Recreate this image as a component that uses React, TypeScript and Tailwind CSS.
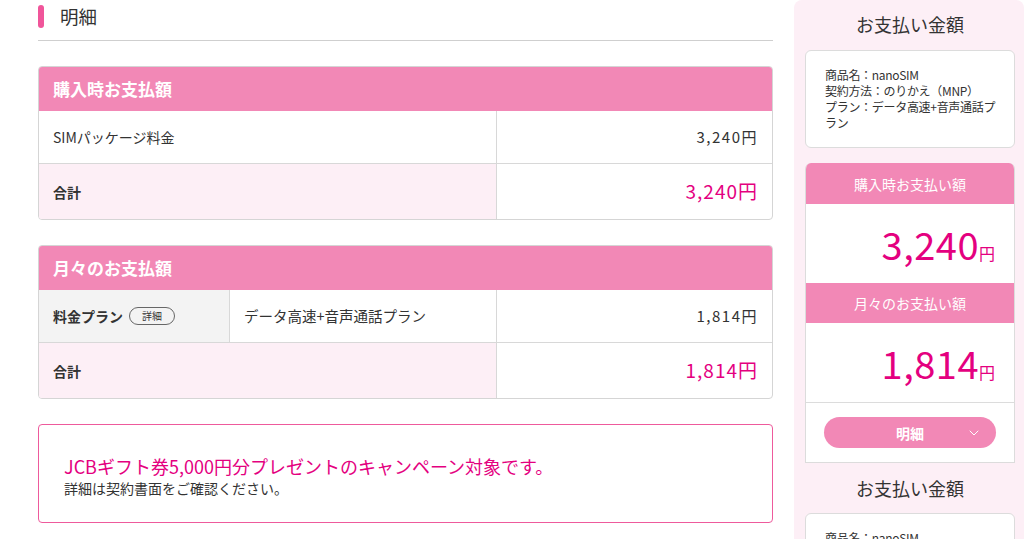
import { ChevronDown } from "lucide-react";

const font = {
  fontFamily: '"Noto Sans CJK JP", "Noto Sans", sans-serif',
};

const Yen = ({ amount, className }: { amount: string; className?: string }) => (
  <span className={className}>{amount}円</span>
);

const SummaryInfo = () => (
  <div className="rounded-md border border-[#dcdcdc] bg-white py-4 pl-[19px] pr-4 text-xs leading-4 tracking-[-0.3px] text-[#333] [line-break:anywhere]">
    <p>商品名：nanoSIM</p>
    <p>契約方法：のりかえ（MNP）</p>
    <p>プラン：データ高速+音声通話プラン</p>
  </div>
);

const BigAmount = ({ value }: { value: string }) => (
  <div className="flex h-[79px] items-center justify-end bg-white pr-[19px] text-[#e4007f]">
    <span className="flex items-baseline">
      <span className="text-[38px] leading-none tracking-[0.5px]">{value}</span>
      <span className="text-base leading-none">円</span>
    </span>
  </div>
);

export default function App() {
  return (
    <div className="flex h-[539px] w-[1024px] overflow-hidden bg-white text-[#333]" style={font}>
      {/* main */}
      <div className="ml-[38px] w-[735px] shrink-0">
        <div className="flex h-[41px] items-start border-b border-[#cfcfcf] pt-[5px]">
          <div className="h-[23px] w-[6px] rounded-sm bg-[#f0559a]" />
          <h2 className="ml-4 text-[18.5px] leading-[23px]">明細</h2>
        </div>

        <div className="mt-[25px] overflow-hidden rounded border border-[#d5d5d5]">
          <div className="flex h-[44px] items-center bg-[#f288b6] pl-[14px] text-[17px] font-bold text-white">
            購入時お支払額
          </div>
          <div className="grid h-[52px] grid-cols-[458px_1fr] text-sm">
            <div className="flex items-center border-r border-[#d8d8d8] pl-[14px]">SIMパッケージ料金</div>
            <div className="flex items-center justify-end pr-[14px]">
              <Yen amount="3,240" className="text-[15px] tracking-[1.5px]" />
            </div>
          </div>
          <div className="grid h-[56px] grid-cols-[458px_1fr] border-t border-[#d8d8d8]">
            <div className="flex items-center border-r border-[#d8d8d8] bg-[#fdeff6] pl-[14px] text-sm font-bold">合計</div>
            <div className="flex items-center justify-end pr-[14px] text-[#e4007f]">
              <Yen amount="3,240" className="text-[19px] tracking-[1px]" />
            </div>
          </div>
        </div>

        <div className="mt-[25px] overflow-hidden rounded border border-[#d5d5d5]">
          <div className="flex h-[44px] items-center bg-[#f288b6] pl-[14px] text-[17px] font-bold text-white">
            月々のお支払額
          </div>
          <div className="grid h-[52px] grid-cols-[191px_267px_1fr] text-sm">
            <div className="flex items-center gap-1 border-r border-[#d8d8d8] bg-[#f3f3f3] pl-[14px] font-bold">
              料金プラン
              <span className="ml-[2px] flex h-[18px] w-[46px] items-center justify-center rounded-full border border-[#666] text-[10px] font-normal">
                詳細
              </span>
            </div>
            <div className="flex items-center border-r border-[#d8d8d8] pl-[14px] text-[14.5px]">データ高速+音声通話プラン</div>
            <div className="flex items-center justify-end pr-[14px]">
              <Yen amount="1,814" className="text-[15px] tracking-[1.5px]" />
            </div>
          </div>
          <div className="grid h-[56px] grid-cols-[458px_1fr] border-t border-[#d8d8d8]">
            <div className="flex items-center border-r border-[#d8d8d8] bg-[#fdeff6] pl-[14px] text-sm font-bold">合計</div>
            <div className="flex items-center justify-end pr-[14px] text-[#e4007f]">
              <Yen amount="1,814" className="text-[19px] tracking-[1px]" />
            </div>
          </div>
        </div>

        <div className="mt-[25px] flex h-[99px] flex-col justify-center rounded border border-[#ee5a9c] pl-[25px] pt-1">
          <p className="text-lg leading-6 text-[#e4007f]">JCBギフト券5,000円分プレゼントのキャンペーン対象です。</p>
          <p className="text-sm leading-5">詳細は契約書面をご確認ください。</p>
        </div>
      </div>

      {/* sidebar */}
      <div className="ml-[21px] w-[230px] shrink-0">
        <div className="rounded-t-lg bg-[#fdeff6] pl-[11px] pr-[9px] pt-3">
          <h3 className="text-center text-lg leading-6">お支払い金額</h3>
          <div className="mt-[14px]">
            <SummaryInfo />
          </div>
          <div className="mt-[15px] overflow-hidden rounded-t-md border-x border-b border-[#dcdcdc] bg-white">
            <div className="flex h-[41px] items-center justify-center bg-[#f288b6] text-sm text-white">
              購入時お支払い額
            </div>
            <BigAmount value="3,240" />
            <div className="flex h-[40px] items-center justify-center bg-[#f288b6] text-sm text-white">
              月々のお支払い額
            </div>
            <BigAmount value="1,814" />
            <div className="flex h-[60px] items-center justify-center border-t border-[#dcdcdc]">
              <button className="relative flex h-[31px] w-[172px] items-center justify-center rounded-full bg-[#f288b6] text-sm font-bold text-white">
                明細
                <ChevronDown className="absolute right-[14px] h-4 w-4" strokeWidth={1.5} />
              </button>
            </div>
          </div>
        </div>
        <div className="bg-[#fdeff6] pl-[11px] pr-[9px] pt-[13px] pb-4">
          <h3 className="text-center text-lg leading-6">お支払い金額</h3>
          <div className="mt-[13px]">
            <SummaryInfo />
          </div>
        </div>
      </div>
    </div>
  );
}
